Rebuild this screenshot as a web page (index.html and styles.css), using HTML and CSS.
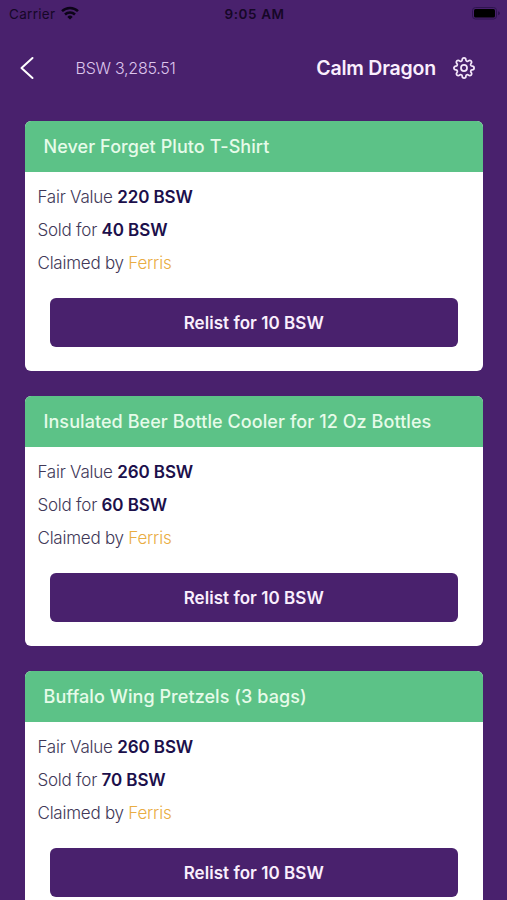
FILE: index.html
```html
<!DOCTYPE html>
<html lang="en">
<head>
<meta charset="utf-8">
<title>Listings</title>
<link rel="stylesheet" href="styles.css">
</head>
<body>
<div class="status">
  <div class="carrier"><span class="carrier-name">Carrier</span>
    <svg class="wifi" viewBox="0 0 18 14" fill="none" stroke="#0c0418" stroke-width="2.5"><path d="M1 5.2a11.6 11.6 0 0 1 16 0M4 8.5a7.2 7.2 0 0 1 10 0"/><path d="M9 13.5 6.3 10.9a3.9 3.9 0 0 1 5.4 0z" fill="#0c0418" stroke="none"/></svg>
  </div>
  <div class="time">9:05 AM</div>
  <svg class="battery" viewBox="0 0 28 13"><rect x=".5" y=".5" width="24" height="11.5" rx="3" fill="none" stroke="#2f1450"/><rect x="2" y="2" width="21" height="8.5" rx="1.5" fill="#000"/><path d="M26 4.2q2 .7 2 2t-2 2z" fill="#2f1450"/></svg>
</div>
<header class="nav">
  <svg class="back" viewBox="0 0 14 24" fill="none" stroke="#fff" stroke-width="2" stroke-linecap="round" stroke-linejoin="round"><path d="M12.5 2 1.5 12l11 10"/></svg>
  <span class="balance">BSW 3,285.51</span>
  <span class="user">Calm Dragon</span>
  <svg class="gear" viewBox="0 0 24 24" fill="none" stroke="#f4e6fa" stroke-width="1.9" stroke-linecap="round" stroke-linejoin="round"><circle cx="12" cy="12" r="3.3"/><path d="M19.4 15a1.65 1.65 0 0 0 .33 1.82l.06.06a2 2 0 0 1 0 2.83 2 2 0 0 1-2.83 0l-.06-.06a1.65 1.65 0 0 0-1.82-.33 1.65 1.65 0 0 0-1 1.51V21a2 2 0 0 1-2 2 2 2 0 0 1-2-2v-.09A1.65 1.65 0 0 0 9 19.4a1.65 1.65 0 0 0-1.82.33l-.06.06a2 2 0 0 1-2.83 0 2 2 0 0 1 0-2.83l.06-.06a1.65 1.65 0 0 0 .33-1.82 1.65 1.65 0 0 0-1.51-1H3a2 2 0 0 1-2-2 2 2 0 0 1 2-2h.09A1.65 1.65 0 0 0 4.6 9a1.65 1.65 0 0 0-.33-1.82l-.06-.06a2 2 0 0 1 0-2.83 2 2 0 0 1 2.83 0l.06.06a1.65 1.65 0 0 0 1.82.33H9a1.65 1.65 0 0 0 1-1.51V3a2 2 0 0 1 2-2 2 2 0 0 1 2 2v.09a1.65 1.65 0 0 0 1 1.51 1.65 1.65 0 0 0 1.82-.33l.06-.06a2 2 0 0 1 2.83 0 2 2 0 0 1 0 2.83l-.06.06a1.65 1.65 0 0 0-.33 1.82V9a1.65 1.65 0 0 0 1.51 1H21a2 2 0 0 1 2 2 2 2 0 0 1-2 2h-.09a1.65 1.65 0 0 0-1.51 1z"/></svg>
</header>
<main class="list">
  <article class="card">
    <h2 class="title">Never Forget Pluto T-Shirt</h2>
    <div class="details">
      <p>Fair Value <b>220 BSW</b></p>
      <p>Sold for <b>40 BSW</b></p>
      <p>Claimed by <span class="name">Ferris</span></p>
    </div>
    <button class="relist">Relist for 10 BSW</button>
  </article>
  <article class="card">
    <h2 class="title">Insulated Beer Bottle Cooler for 12 Oz Bottles</h2>
    <div class="details">
      <p>Fair Value <b>260 BSW</b></p>
      <p>Sold for <b>60 BSW</b></p>
      <p>Claimed by <span class="name">Ferris</span></p>
    </div>
    <button class="relist">Relist for 10 BSW</button>
  </article>
  <article class="card">
    <h2 class="title">Buffalo Wing Pretzels (3 bags)</h2>
    <div class="details">
      <p>Fair Value <b>260 BSW</b></p>
      <p>Sold for <b>70 BSW</b></p>
      <p>Claimed by <span class="name">Ferris</span></p>
    </div>
    <button class="relist">Relist for 10 BSW</button>
  </article>
</main>
</body>
</html>
```
FILE: styles.css
```css
* { box-sizing: border-box; }
body {
  margin: 0;
  height: 900px;
  overflow: hidden;
  background: #49216d;
  font-family: Inter, "Liberation Sans", sans-serif;
}
.status {
  display: grid;
  grid-template-columns: 1fr auto 1fr;
  align-items: center;
  height: 27px;
  padding: 0 7px 0 9px;
  color: #160727;
  font-size: 13.5px;
}
.carrier { display: flex; align-items: center; gap: 6px; }
.carrier-name { letter-spacing: 0.3px; }
.wifi { width: 18px; height: 14px; margin-top: -2px; }
.time { font-weight: 600; letter-spacing: 0.6px; }
.battery { width: 28px; height: 13px; justify-self: end; }
.nav {
  display: flex;
  align-items: center;
  height: 82px;
  padding: 0 32px 0 20px;
}
.back { width: 14px; height: 24px; }
.balance {
  margin-left: 41.5px;
  color: #dcc5ec;
  font-size: 16px;
  font-weight: 300;
  letter-spacing: -0.25px;
}
.user {
  margin-left: auto;
  color: #faeffd;
  font-size: 19.5px;
  font-weight: 600;
  letter-spacing: -0.2px;
}
.gear { width: 22px; height: 22px; margin-left: 17px; }
.list {
  display: flex;
  flex-direction: column;
  gap: 25px;
  padding: 12px 24.5px 0 25px;
}
.card {
  flex: none;
  height: 250px;
  overflow: hidden;
  border-radius: 6px;
  background: #fff;
}
.title {
  height: 50.5px;
  margin: 0;
  padding-left: 18.5px;
  background: #5cc287;
  color: #e6fbe9;
  font-size: 18px;
  font-weight: 500;
  letter-spacing: 0.07px;
  line-height: 51px;
  white-space: nowrap;
}
.details {
  padding: 9px 12.5px 0;
  color: #413858;
  font-size: 17px;
  font-weight: 300;
  letter-spacing: -0.24px;
}
.details p { margin: 0; line-height: 33px; }
.details b { color: #1c104b; font-weight: 600; letter-spacing: -0.1px; }
.details .name { color: #e9ad43; }
.relist {
  display: block;
  width: 408.5px;
  height: 49px;
  margin: 18px 0 0 24.5px;
  padding: 1px 0 0;
  border: 0;
  border-radius: 6px;
  background: #49216d;
  color: #faeffd;
  font: 600 17px Inter, "Liberation Sans", sans-serif;
  letter-spacing: 0.05px;
}
```
